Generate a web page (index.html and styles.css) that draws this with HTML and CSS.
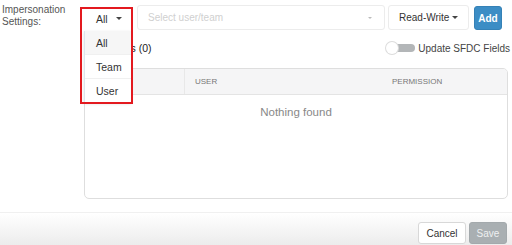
FILE: index.html
```html
<!DOCTYPE html>
<html lang="en">

<head>
    <meta charset="UTF-8">
    <meta name="viewport" content="width=device-width, initial-scale=1.0">
    <title>Impersonation Settings</title>
    <link rel="stylesheet" href="styles.css">
</head>

<body>
    <div class="panel">
        <!--Settings row--------------------------------------------------------------------->
        <div class="field">
            <div class="field-label">Impersonation<br>Settings:</div>
            <div class="field-body">
                <div class="controls">
                    <div class="select select-type">
                        <span>All</span>
                        <span class="caret"></span>
                    </div>
                    <div class="select select-user">
                        <span class="placeholder">Select user/team</span>
                        <span class="caret caret-light"></span>
                    </div>
                    <div class="select select-perm">
                        <span>Read-Write</span>
                        <span class="caret"></span>
                    </div>
                    <button class="btn btn-add" type="button">Add</button>
                </div>

                <div class="subhead">
                    <span class="count">Members (0)</span>
                    <label class="toggle-wrap">
                        <span class="toggle"><span class="knob"></span></span>
                        <span>Update SFDC Fields</span>
                    </label>
                </div>

                <!--Table------------------------------------------------------------------->
                <div class="grid">
                    <div class="grid-head">
                        <div class="col col-a"></div>
                        <div class="col col-b">USER</div>
                        <div class="col col-c">PERMISSION</div>
                    </div>
                    <div class="grid-empty">Nothing found</div>
                </div>

                <!--Open dropdown + annotation-------------------------------------------->
                <ul class="type-menu">
                    <li class="active">All</li>
                    <li>Team</li>
                    <li>User</li>
                </ul>
                <div class="highlight"></div>
            </div>
        </div>

        <!--Footer--------------------------------------------------------------------------->
        <div class="footer">
            <button class="btn btn-cancel" type="button">Cancel</button>
            <button class="btn btn-save" type="button" disabled>Save</button>
        </div>
    </div>
</body>

</html>
```

FILE: styles.css
```css
* {
    box-sizing: border-box;
}

body {
    margin: 0;
    background-color: white;
    color: #333;
    font-family: "Liberation Sans", Arial, sans-serif;
    font-size: 10px;
}

.panel {
    width: 512px;
    height: 245px;
    display: flex;
    flex-direction: column;
}

.field {
    display: flex;
    height: 212px;
}

.field-label {
    width: 84px;
    padding: 4px 0 0 2px;
    color: #555;
    font-size: 10px;
    line-height: 12px;
}

.field-body {
    position: relative;
    width: 424px;
}

.controls {
    display: flex;
    margin-top: 5px;
    height: 25px;
}

.select {
    display: flex;
    align-items: center;
    justify-content: space-between;
    background-color: white;
    border: 1px solid #ececec;
    border-radius: 3px;
    padding: 0 10px;
    height: 25px;
}

.select-type {
    width: 47px;
    margin-top: 1px;
    border-color: transparent;
    padding: 0 8px 0 11px;
    font-size: 10.5px;
}

.select-user {
    width: 248px;
    margin-left: 6px;
}

.select-perm {
    width: 81px;
    margin-left: 3px;
    padding: 0 10px 0 10px;
}

.placeholder {
    color: #d0d0d0;
}

.caret {
    width: 0;
    height: 0;
    border-left: 3px solid transparent;
    border-right: 3px solid transparent;
    border-top: 3px solid #444;
}

.caret-light {
    border-left-width: 2px;
    border-right-width: 2px;
    border-top: 2px solid #bbb;
    margin-right: 2px;
}

.btn {
    font-family: "Liberation Sans", Arial, sans-serif;
    font-size: 10px;
    border-radius: 3px;
    padding: 0;
    cursor: pointer;
}

.btn-add {
    width: 28px;
    height: 24px;
    margin-left: 5px;
    margin-top: 1px;
    background-color: #3c8dc5;
    border: 1px solid #3581b6;
    color: white;
    font-weight: bold;
}

.subhead {
    display: flex;
    align-items: center;
    justify-content: space-between;
    height: 18px;
    margin-top: 9px;
    padding-left: 8px;
    font-size: 10.5px;
    color: #222;
}

.toggle-wrap {
    display: flex;
    align-items: center;
    gap: 3px;
    color: #444;
    font-size: 10px;
    margin-right: -2px;
}

.toggle {
    position: relative;
    width: 29px;
    height: 12px;
}

.toggle::before {
    content: "";
    position: absolute;
    left: 5px;
    right: 0;
    top: 2px;
    height: 8px;
    border-radius: 4px;
    background-color: #b3b6b8;
}

.knob {
    position: absolute;
    left: 0;
    top: 0;
    width: 12px;
    height: 12px;
    border-radius: 50%;
    background-color: white;
    box-shadow: 0 0 0 1px #dcdcdc;
}

.grid {
    margin-top: 11px;
    height: 131px;
    border: 1px solid #dedede;
    border-radius: 5px;
    overflow: hidden;
}

.grid-head {
    display: flex;
    height: 26px;
    background-color: #f5f5f6;
    border-bottom: 1px solid #e4e4e4;
    color: #777;
    font-size: 8px;
}

.col {
    display: flex;
    align-items: center;
    padding-left: 10px;
}

.col-a {
    width: 100px;
    border-right: 1px solid #e8e8e8;
}

.col-b {
    width: 198px;
}

.col-c {
    flex: 1;
    padding-left: 9px;
}

.grid-empty {
    text-align: center;
    padding-top: 11px;
    color: #888;
    font-size: 11.5px;
}

.type-menu {
    position: absolute;
    left: 0;
    top: 31px;
    width: 47px;
    margin: 0;
    padding: 0;
    list-style: none;
    background-color: white;
    border-left: 1px solid #dbe6ec;
    box-shadow: 0 1px 3px rgba(0, 0, 0, 0.12);
    font-size: 10.5px;
}

.type-menu li {
    height: 24px;
    line-height: 24px;
    padding-left: 11px;
    border-bottom: 1px solid #f0f0f0;
}

.type-menu li.active {
    background-color: #f6f6f6;
}

.highlight {
    position: absolute;
    left: -4px;
    top: 7px;
    width: 53px;
    height: 97px;
    border: 2px solid #e3191f;
    pointer-events: none;
}

.footer {
    display: flex;
    justify-content: flex-end;
    align-items: center;
    gap: 3px;
    flex: 1;
    padding: 8px 5px 0 0;
    border-top: 1px solid #f0f0f0;
    background: linear-gradient(white, #ececec);
}

.btn-cancel {
    width: 48px;
    height: 22px;
    background-color: white;
    border: 1px solid #d8d8d8;
    color: #333;
}

.btn-save {
    width: 38px;
    height: 22px;
    background-color: #a9afb2;
    border: 1px solid #a3a9ac;
    color: #eef0f1;
}
```
